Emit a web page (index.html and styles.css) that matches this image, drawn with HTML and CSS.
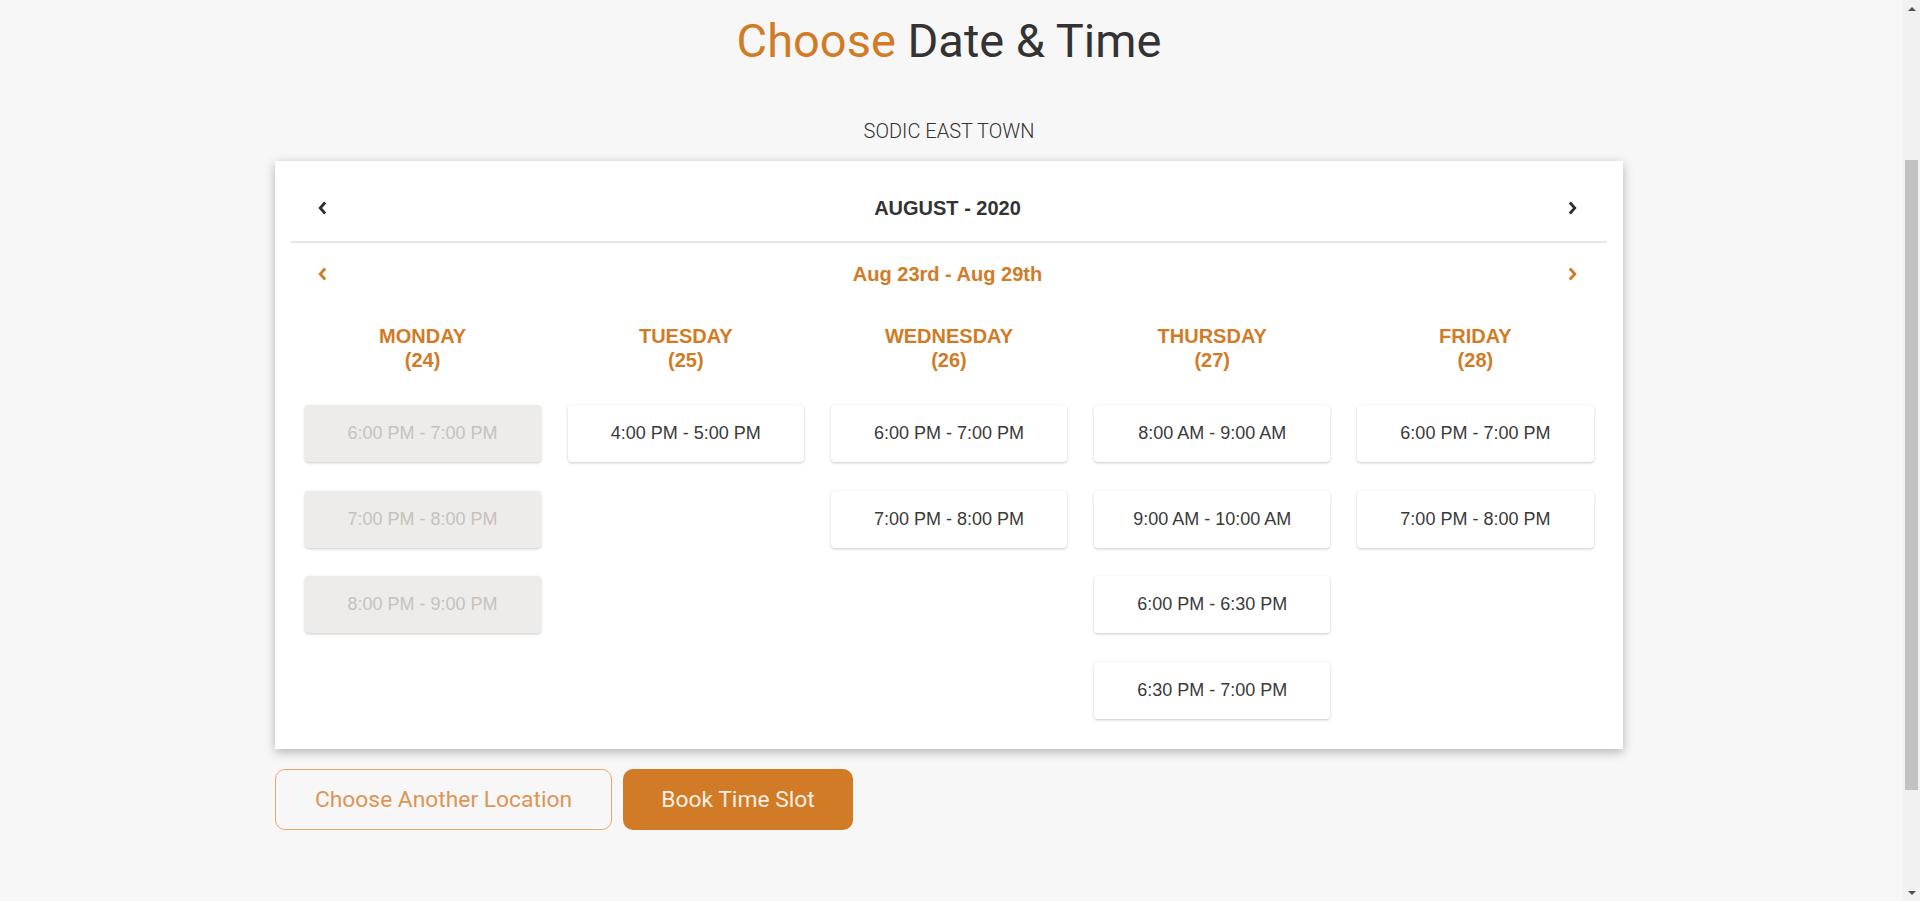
FILE: index.html
```html
<!DOCTYPE html>
<html lang="en">
<head>
<meta charset="utf-8">
<title>Choose Date &amp; Time</title>
<link rel="stylesheet" href="styles.css">
</head>
<body>
<div class="screen">
  <div class="viewport">
    <main class="booking">
      <h1 class="title"><span class="accent">Choose</span> Date &amp; Time</h1>
      <p class="location">SODIC EAST TOWN</p>

      <section class="calendar">
        <div class="month-bar">
          <button class="nav-btn nav-btn--dark" aria-label="Previous month"><svg width="9" height="14" viewBox="0 0 9 14"><polyline points="7.2,1.5 2.2,7 7.2,12.5" fill="none" stroke="currentColor" stroke-width="2.8"/></svg></button>
          <h2 class="month">AUGUST - 2020</h2>
          <button class="nav-btn nav-btn--dark nav-btn--end" aria-label="Next month"><svg width="9" height="14" viewBox="0 0 9 14"><polyline points="1.8,1.5 6.8,7 1.8,12.5" fill="none" stroke="currentColor" stroke-width="2.8"/></svg></button>
        </div>
        <div class="week-bar">
          <button class="nav-btn nav-btn--orange" aria-label="Previous week"><svg width="9" height="14" viewBox="0 0 9 14"><polyline points="7.2,1.5 2.2,7 7.2,12.5" fill="none" stroke="currentColor" stroke-width="2.8"/></svg></button>
          <h3 class="week">Aug 23rd - Aug 29th</h3>
          <button class="nav-btn nav-btn--orange nav-btn--end" aria-label="Next week"><svg width="9" height="14" viewBox="0 0 9 14"><polyline points="1.8,1.5 6.8,7 1.8,12.5" fill="none" stroke="currentColor" stroke-width="2.8"/></svg></button>
        </div>

        <div class="days">
          <div class="day">
            <div class="day-head">MONDAY<br>(24)</div>
            <div class="slots">
              <div class="slot slot--disabled">6:00 PM - 7:00 PM</div>
              <div class="slot slot--disabled">7:00 PM - 8:00 PM</div>
              <div class="slot slot--disabled">8:00 PM - 9:00 PM</div>
            </div>
          </div>
          <div class="day">
            <div class="day-head">TUESDAY<br>(25)</div>
            <div class="slots">
              <div class="slot">4:00 PM - 5:00 PM</div>
            </div>
          </div>
          <div class="day">
            <div class="day-head">WEDNESDAY<br>(26)</div>
            <div class="slots">
              <div class="slot">6:00 PM - 7:00 PM</div>
              <div class="slot">7:00 PM - 8:00 PM</div>
            </div>
          </div>
          <div class="day">
            <div class="day-head">THURSDAY<br>(27)</div>
            <div class="slots">
              <div class="slot">8:00 AM - 9:00 AM</div>
              <div class="slot">9:00 AM - 10:00 AM</div>
              <div class="slot">6:00 PM - 6:30 PM</div>
              <div class="slot">6:30 PM - 7:00 PM</div>
            </div>
          </div>
          <div class="day">
            <div class="day-head">FRIDAY<br>(28)</div>
            <div class="slots">
              <div class="slot">6:00 PM - 7:00 PM</div>
              <div class="slot">7:00 PM - 8:00 PM</div>
            </div>
          </div>
        </div>
      </section>

      <div class="actions">
        <button class="btn btn--outline">Choose Another Location</button>
        <button class="btn btn--primary">Book Time Slot</button>
      </div>
    </main>
  </div>

  <div class="scrollbar" aria-hidden="true">
    <div class="sb-btn sb-btn--up"></div>
    <div class="sb-track"><div class="sb-thumb"></div></div>
    <div class="sb-btn sb-btn--down"></div>
  </div>
</div>
</body>
</html>
```

FILE: styles.css
```css
body {
  margin: 0;
  background: #f7f7f7;
  font-family: "Liberation Sans", Arial, sans-serif;
  color: #333;
}

.screen {
  display: flex;
  height: 100vh;
  overflow: hidden;
}

.viewport {
  flex: 1;
  min-width: 0;
  overflow: hidden;
}

/* scrollbar strip */
.scrollbar {
  width: 17px;
  flex: none;
  display: flex;
  flex-direction: column;
  background: #f1f1f1;
}
.sb-btn {
  height: 17px;
  flex: none;
  display: flex;
  align-items: center;
  justify-content: center;
}
.sb-btn::before {
  content: "";
  width: 0;
  height: 0;
  border-left: 4px solid transparent;
  border-right: 4px solid transparent;
}
.sb-btn--up::before {
  border-bottom: 4px solid #505050;
}
.sb-btn--down::before {
  border-top: 4px solid #505050;
}
.sb-track {
  flex: 1;
  padding-top: 143px;
}
.sb-thumb {
  height: 630px;
  margin: 0 2px;
  background: #c1c1c1;
}

.booking {
  width: 1348px;
  margin: 0 auto;
  padding: 12px 5px 0 0;
  box-sizing: content-box;
}

.title {
  margin: 0;
  text-align: center;
  font-family: Roboto, "Noto Sans", sans-serif;
  font-weight: 400;
  font-size: 47px;
  line-height: 58px;
  color: #333;
}
.title .accent {
  color: #d27b26;
}

.location {
  margin: 49px 0 0;
  text-align: center;
  font-family: Roboto, "Noto Sans", sans-serif;
  font-weight: 300;
  font-size: 20px;
  line-height: 24px;
  color: #333;
}

.calendar {
  margin-top: 18px;
  background: #fff;
  padding: 0 16px 30px;
  box-shadow: 0 3px 10px rgba(0, 0, 0, 0.28);
}

.month-bar,
.week-bar {
  display: grid;
  grid-template-columns: 1fr auto 1fr;
  align-items: center;
  padding-left: 27px;
  padding-right: 30px;
}
.month-bar {
  padding-top: 35px;
  padding-bottom: 21px;
  border-bottom: 2px solid #e4e8eb;
}
.week-bar {
  padding-top: 19px;
}

.nav-btn {
  justify-self: start;
  display: flex;
  align-items: center;
  padding: 0;
  border: 0;
  background: none;
  cursor: pointer;
}
.nav-btn--end {
  justify-self: end;
}
.nav-btn--dark {
  color: #2b2f36;
}
.nav-btn--orange {
  color: #d27b26;
}

.month,
.week {
  margin: 0;
  font-size: 20px;
  line-height: 24px;
  font-weight: 700;
  text-align: center;
}
.month {
  color: #333;
}
.week {
  color: #d27b26;
}

.days {
  display: grid;
  grid-template-columns: repeat(5, 1fr);
  padding-top: 38px;
}

.day-head {
  text-align: center;
  font-weight: 700;
  font-size: 20px;
  line-height: 24px;
  color: #d27b26;
  margin-bottom: 33px;
}

.slots {
  display: flex;
  flex-direction: column;
  gap: 28.5px;
  padding: 0 13.5px;
}

.slot {
  height: 57px;
  display: flex;
  align-items: center;
  justify-content: center;
  background: #fff;
  border-radius: 4px;
  box-shadow: 0 1px 3px rgba(0, 0, 0, 0.22);
  font-size: 18px;
  color: #3a3a3a;
}
.slot--disabled {
  background: #eeecea;
  color: #c6c1bc;
}

.actions {
  display: flex;
  gap: 11px;
  margin-top: 20px;
}

.btn {
  height: 61px;
  border-radius: 10px;
  font-family: Roboto, "Noto Sans", sans-serif;
  font-size: 22.8px;
  font-weight: 400;
  cursor: pointer;
}
.btn--outline {
  width: 337px;
  background: transparent;
  border: 1.5px solid #e8a66c;
  color: #de9555;
}
.btn--primary {
  width: 230px;
  background: #d27b26;
  border: 0;
  color: #fbeee2;
}
```
